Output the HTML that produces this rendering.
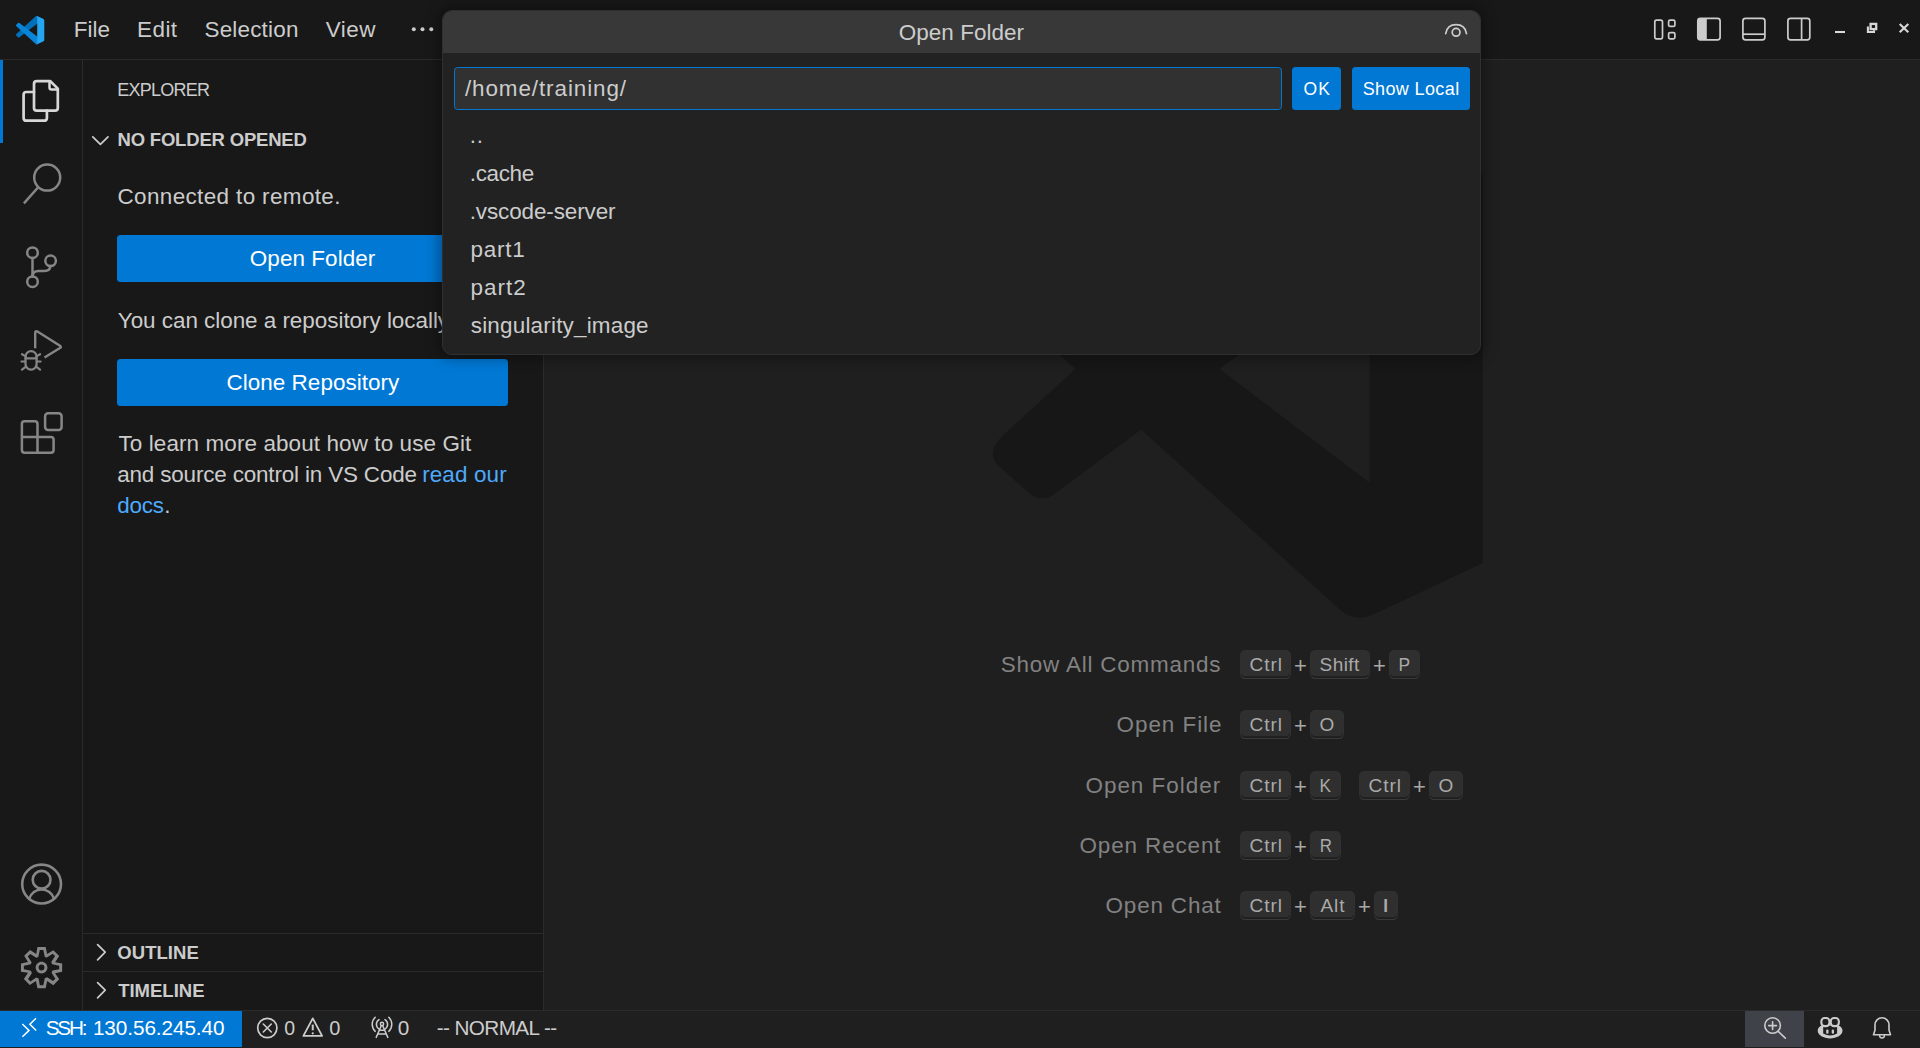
<!DOCTYPE html>
<html lang="en">
<head>
<meta charset="utf-8">
<title>Open Folder - Visual Studio Code</title>
<style>
*{box-sizing:border-box;margin:0;padding:0}
html,body{width:1920px;height:1048px;overflow:hidden;background:#1f1f1f}
body{position:relative;font-family:"Liberation Sans",sans-serif;color:#cccccc;-webkit-font-smoothing:antialiased}
.abs{position:absolute}
.t{position:absolute;white-space:pre;line-height:1}
svg{position:absolute;overflow:visible}
#titlebar{left:0;top:0;width:1920px;height:60px;background:#181818;border-bottom:1px solid #2b2b2b}
#activity{left:0;top:60px;width:83px;height:950px;background:#181818;border-right:1px solid #2b2b2b}
#sidebar{left:83px;top:60px;width:461px;height:950px;background:#181818;border-right:1px solid #2b2b2b}
#editor{left:544px;top:60px;width:1376px;height:950px;background:#1f1f1f}
#status{left:0;top:1010px;width:1920px;height:38px;background:#1f1f1f;border-top:1px solid #2b2b2b}
.btn{background:#0078d4;border-radius:3.5px}
.key{position:absolute;height:29px;background:rgba(128,128,128,.17);border:1.7px solid rgba(51,51,51,.6);border-bottom-color:rgba(68,68,68,.6);border-radius:5.2px;box-shadow:inset 0 -1.7px 0 rgba(0,0,0,.36)}
#dialog{left:442px;top:10px;width:1039px;height:345px;background:#222222;border:1px solid #303031;border-radius:10px;box-shadow:0 0 14px 3px rgba(0,0,0,.36);overflow:hidden}
#dtitle{left:0;top:0;width:1039px;height:42px;background:#383838}
#dinput{left:454px;top:67px;width:828px;height:43px;background:#313131;border:1px solid #0078d4;border-radius:3.5px}
</style>
</head>
<body>
<div id="titlebar" class="abs"></div>
<div id="activity" class="abs"></div>
<div id="sidebar" class="abs"></div>
<div id="editor" class="abs"></div>
<div id="status" class="abs"></div>
<!-- watermark logo -->
<svg class="abs" style="left:0;top:0" width="1920" height="1048" viewBox="0 0 1920 1048">
<path fill="#171717" fill-rule="evenodd" d="M1075.4 369.1 L1004.3 434.3 Q984 453 999.5 466.8 L1028.7 492.7 Q1041.3 504 1056.2 492.7 L1141.1 429.5 L1340.2 609.8 Q1355 623.2 1374.9 613.8 L1482.8 563.1 L1482.8 175.1 L1374.9 124.4 Q1355 115 1340.2 128.4 L1141.1 308.7 L1056.2 245.5 Q1041.3 234.2 1028.7 245.5 L999.5 271.4 Q984 285.2 1004.3 303.9 Z M1219.7 369.1 L1369.8 483 L1369.8 255.2 Z"/>
</svg>
<!-- title logo -->
<svg class="abs" style="left:15.9px;top:15.9px" width="28.3" height="28.3" viewBox="0 0 256 256">
<path d="M246.94 27.6383L194.193 2.24138C188.088 -0.698302 180.791 0.541721 175.999 5.33332L3.32371 162.773C-1.32085 167.008 -1.31551 174.32 3.33523 178.548L17.4399 191.37C21.2421 194.827 26.9682 195.081 31.0619 191.976L239.003 34.2269C245.979 28.9347 255.999 33.9103 255.999 42.6667V42.0543C255.999 35.9078 252.478 30.3047 246.94 27.6383Z" fill="#0070ba"/>
<path d="M246.94 228.362L194.193 253.759C188.088 256.698 180.791 255.458 175.999 250.667L3.32371 93.2272C-1.32085 88.9925 -1.31551 81.6802 3.33523 77.4523L17.4399 64.6298C21.2421 61.1733 26.9682 60.9188 31.0619 64.0244L239.003 221.773C245.979 227.065 255.999 222.09 255.999 213.333V213.946C255.999 220.092 252.478 225.695 246.94 228.362Z" fill="#0a84d6"/>
<path d="M194.196 253.763C188.089 256.7 180.792 255.459 176 250.667C181.904 256.571 192 252.389 192 244.039V11.9606C192 3.61057 181.904 -0.571175 176 5.33321C180.792 0.541166 188.089 -0.700607 194.196 2.23648L246.934 27.5985C252.476 30.2635 256 35.8686 256 42.0178V213.983C256 220.132 252.476 225.737 246.934 228.402L194.196 253.763Z" fill="#24a6f1"/>
</svg>
<!-- menu dots -->
<svg class="abs" style="left:0;top:0" width="1920" height="60" viewBox="0 0 1920 60" fill="#cccccc">
<circle cx="413.8" cy="29.3" r="2"/><circle cx="422.5" cy="29.3" r="2"/><circle cx="431.3" cy="29.3" r="2"/>
<!-- layout icons -->
<g fill="none" stroke="#cccccc" stroke-width="1.7" stroke-linejoin="round">
<rect x="1654.8" y="20.2" width="7.7" height="18.6" rx="1.7"/>
<rect x="1668.6" y="20.2" width="6.3" height="6.2" rx="1.5"/>
<rect x="1668.6" y="32.6" width="6.3" height="6.2" rx="1.5"/>
<rect x="1697.8" y="18.3" width="22.3" height="21.5" rx="2.6"/>
<rect x="1742.9" y="18.3" width="22" height="21.5" rx="2.6"/>
<path d="M1742.9 34.2 H1764.9"/>
<rect x="1787.9" y="18.3" width="21.9" height="21.5" rx="2.6"/>
<path d="M1801.6 18.3 V39.8"/>
</g>
<path d="M1697.8 20.9 Q1697.8 18.3 1700.4 18.3 H1706.8 V39.8 H1700.4 Q1697.8 39.8 1697.8 37.2 Z" fill="#cccccc"/>
<!-- window controls -->
<g fill="none" stroke="#d8d8d8" stroke-width="2.1">
<path d="M1835 32 H1845"/>
<path d="M1899.7 23.9 L1908.3 32.3 M1908.3 23.9 L1899.7 32.3"/>
<rect x="1870.6" y="23.9" width="5.6" height="5.2" stroke-width="2.300"/>
<path d="M1867.9 26.5 V32 H1874 V30.2"/>
</g>
</svg>
<!-- activity bar -->
<div class="abs" style="left:0;top:60px;width:3.2px;height:83px;background:#0078d4"></div>
<svg class="abs" style="left:0;top:0" width="83" height="1010" viewBox="0 0 83 1010" fill="none" stroke-linecap="round" stroke-linejoin="round">
<!-- files -->
<g stroke="#d7d7d7" stroke-width="2.7">
<path d="M36.8 81.1 H50.3 L57.8 88.6 V108 Q57.8 110.7 55 110.7 H36.8 Q34 110.7 34 108 V83.900 Q34 81.1 36.8 81.1 Z"/>
<path d="M49.5 81.6 V87.5 Q49.5 89.5 51.5 89.5 H57.3" stroke-width="2.5"/>
<path d="M34 92 H26.4 Q23.6 92 23.6 94.8 V117.900 Q23.6 120.7 26.4 120.7 H44.100 Q46.900 120.7 46.900 117.900 V110.7"/>
</g>
<g stroke="#868686" stroke-width="2.5">
<!-- search -->
<circle cx="47.2" cy="177.6" r="13"/>
<path d="M38.4 187 L23.900 203.400" stroke-linecap="butt"/>
<!-- source control -->
<circle cx="32.5" cy="252.7" r="5.300"/>
<circle cx="32.5" cy="281.700" r="5.300"/>
<circle cx="50.600" cy="260.800" r="5.300"/>
<path d="M32.5 258 V276.400"/>
<path d="M50.400 266.100 Q50 270.900 44.500 270.900 H38.500 Q32.500 270.900 32.500 276.400"/>
<!-- debug -->
<path d="M35.200 348.300 V332.800 Q35.200 330.300 37.400 331.600 L60 345.800 Q61.700 346.900 60 348 L44.500 357.600" stroke-width="2.4" stroke-linecap="butt"/>
<g stroke-width="2.2">
<rect x="25.500" y="351.200" width="11.100" height="18.500" rx="5.550"/>
<path d="M25.500 358.400 H36.600 M25.800 356.400 L22 354.200 M25.300 361.500 H21.500 M26.300 366.400 L22 369.600 M36.300 356.400 L40.100 354.200 M36.800 361.500 H40.600 M35.800 366.400 L40.100 369.600"/>
</g>
<!-- extensions -->
<path d="M24.600 421.300 H34.800 Q37.500 421.300 37.500 424 V436.900 H50.900 Q53.600 436.900 53.600 439.600 V450.100 Q53.600 452.800 50.900 452.800 H24.600 Q21.900 452.800 21.900 450.100 V424 Q21.900 421.300 24.600 421.300 Z M21.900 436.900 H37.500 V452.800"/>
<rect x="45.100" y="413.300" width="16.500" height="16.600" rx="3"/>
<!-- account -->
<g stroke-width="2.600">
<circle cx="41.600" cy="884.050" r="19.400"/>
<circle cx="41.600" cy="879.750" r="8.900"/>
<path d="M29.300 898.700 A12.800 12.800 0 0 1 53.900 898.700"/>
</g>
</g>
</svg>
<!-- gear -->
<svg class="abs" style="left:18.4px;top:943.75px" width="47.1" height="47.1" viewBox="0 0 16 16"><path fill="#868686" fill-rule="evenodd" d="M9.1 4.4L8.6 2H7.4l-.5 2.4-.7.3-2-1.3-.9.8 1.3 2-.2.7-2.4.5v1.2l2.4.5.3.8-1.3 2 .8.8 2-1.3.8.3.4 2.3h1.2l.5-2.4.8-.3 2 1.3.8-.8-1.3-2 .3-.8 2.3-.4V7.4l-2.4-.5-.3-.8 1.3-2-.8-.8-2 1.3-.7-.2zM9.4 1l.5 2.4L12 2.1l2 2-1.4 2.1 2.4.4v2.8l-2.4.5L14 12l-2 2-2.1-1.4-.5 2.4H6.6l-.5-2.4L4 13.900l-2-2 1.4-2.1L1 9.400V6.600l2.400-.5L2.100 4l2-2 2.100 1.400.4-2.400h2.800zm.6 7c0 1.100-.9 2-2 2s-2-.9-2-2 .9-2 2-2 2 .9 2 2zM8 9c.6 0 1-.4 1-1s-.4-1-1-1-1 .4-1 1 .4 1 1 1z"/></svg>
<!-- sidebar -->
<svg class="abs" style="left:83px;top:60px" width="461" height="950" viewBox="83 60 461 950" fill="none" stroke="#cccccc" stroke-width="1.7" stroke-linecap="round" stroke-linejoin="round">
<path d="M92.8 136.8 L100.4 144.4 L108 136.8"/>
<path d="M97.600 944.6 L105.200 952.2 L97.600 959.8"/>
<path d="M97.600 982.6 L105.200 990.2 L97.600 997.8"/>
</svg>
<div class="abs btn" style="left:117px;top:235px;width:391px;height:47px"></div>
<div class="abs btn" style="left:117px;top:359px;width:391px;height:47px"></div>
<div class="abs" style="left:83px;top:933px;width:460px;height:1px;background:#2b2b2b"></div>
<div class="abs" style="left:83px;top:971px;width:460px;height:1px;background:#2b2b2b"></div>
<!-- status bar -->
<div class="abs" style="left:0;top:1011px;width:242px;height:36px;background:#0078d4"></div>
<div class="abs" style="left:1745px;top:1011px;width:59px;height:36px;background:#3f4248"></div>
<svg class="abs" style="left:0;top:1010px" width="1920" height="38" viewBox="0 1010 1920 38" fill="none" stroke="#cccccc" stroke-width="1.6" stroke-linecap="round" stroke-linejoin="round">
<path d="M22.3 1024 L29 1030.4 L22.4 1036.700 M36 1018.200 L29.900 1024.300 L36.200 1030.500" stroke="#ffffff" stroke-width="1.5" stroke-linecap="butt" stroke-linejoin="miter"/>
<circle cx="267.3" cy="1028" r="9.600" stroke-width="1.700"/>
<path d="M263.3 1024 L271.3 1032 M271.3 1024 L263.3 1032" stroke-width="1.600"/>
<path d="M312.75 1018.400 L322.100 1035.900 H303.400 Z" stroke-width="1.800"/>
<path d="M312.75 1024.600 V1030.300" stroke-width="2" stroke-linecap="butt"/>
<circle cx="312.75" cy="1033.300" r="1.100" fill="#cccccc" stroke="none"/>
<!-- radio tower -->
<g stroke-width="1.500">
<circle cx="382" cy="1023.900" r="1.600"/>
<path d="M381.300 1025.800 L376.200 1037.400 M382.700 1025.800 L387.800 1037.400 M379.600 1030.300 H384.400 M377.900 1034 H386.100"/>
<path d="M379.030 1029.050 A5.600 5.600 0 0 1 379.030 1019.550 M384.970 1029.050 A5.600 5.600 0 0 0 384.970 1019.550"/>
<path d="M375.200 1031.350 A9.800 9.800 0 0 1 375.200 1017.250 M388.800 1031.350 A9.800 9.800 0 0 0 388.800 1017.250"/>
</g>
<!-- zoom -->
<circle cx="1772.600" cy="1025.500" r="7.800"/>
<path d="M1768.700 1025.600 H1776.500 M1772.600 1021.700 V1029.500 M1778.100 1031.300 L1785.300 1038.100"/>
<!-- copilot -->
<path d="M1821.500 1025.500 C1819 1026.500 1817.700 1028.500 1817.700 1030.800 C1817.700 1035 1823.500 1038.500 1830.100 1038.500 C1836.700 1038.500 1842.500 1035 1842.500 1030.800 C1842.500 1028.500 1841.200 1026.500 1838.700 1025.500 Z M1823.200 1026 H1837.100 V1033.600 Q1830.150 1037.400 1823.200 1033.600 Z" fill="#cccccc" fill-rule="evenodd" stroke="none"/>
<rect x="1826.200" y="1029.400" width="2.300" height="4.300" rx="1" fill="#cccccc" stroke="none"/>
<rect x="1831.700" y="1029.400" width="2.300" height="4.300" rx="1" fill="#cccccc" stroke="none"/>
<rect x="1821.350" y="1017.950" width="8.100" height="8.200" rx="3.300" fill="#1f1f1f" stroke-width="2.100"/>
<rect x="1830.750" y="1017.950" width="8.100" height="8.200" rx="3.300" fill="#1f1f1f" stroke-width="2.100"/>
<!-- bell -->
<path d="M1873.500 1034.700 H1890.500 L1889 1030 V1024.800 A7 7 0 0 0 1875 1024.800 V1030 Z"/>
<path d="M1879.600 1035.500 A2.400 2.400 0 0 0 1884.400 1035.500" stroke-width="1.500"/>
</svg>

<div class="key" style="left:1240.2px;top:650.2px;width:50.5px"></div>
<div class="key" style="left:1310.2px;top:650.2px;width:59.5px"></div>
<div class="key" style="left:1389.1px;top:650.2px;width:30.5px"></div>
<div class="key" style="left:1240.2px;top:710.0px;width:50.5px"></div>
<div class="key" style="left:1310.2px;top:710.0px;width:33.5px"></div>
<div class="key" style="left:1240.2px;top:771.0px;width:50.5px"></div>
<div class="key" style="left:1310.3px;top:771.0px;width:30.5px"></div>
<div class="key" style="left:1359.2px;top:771.0px;width:50.5px"></div>
<div class="key" style="left:1429.2px;top:771.0px;width:33.5px"></div>
<div class="key" style="left:1240.2px;top:831.0px;width:50.5px"></div>
<div class="key" style="left:1310.3px;top:831.0px;width:31.1px"></div>
<div class="key" style="left:1240.2px;top:891.0px;width:50.5px"></div>
<div class="key" style="left:1310.3px;top:891.0px;width:44.4px"></div>
<div class="key" style="left:1374.3px;top:891.0px;width:23.3px"></div>
<span class="t" style="left:73.68px;top:19.00px;font-size:22.46px;letter-spacing:0.009px;color:#cccccc">File</span>
<span class="t" style="left:137.08px;top:19.00px;font-size:22.46px;letter-spacing:0.436px;color:#cccccc">Edit</span>
<span class="t" style="left:204.48px;top:19.00px;font-size:22.46px;letter-spacing:0.193px;color:#cccccc">Selection</span>
<span class="t" style="left:325.84px;top:19.00px;font-size:22.46px;letter-spacing:0.457px;color:#cccccc">View</span>
<span class="t" style="left:117.37px;top:81.00px;font-size:18.0px;letter-spacing:-0.759px;color:#cccccc">EXPLORER</span>
<span class="t" style="left:117.47px;top:131.00px;font-size:18.5px;letter-spacing:-0.187px;color:#cccccc;font-weight:700">NO FOLDER OPENED</span>
<span class="t" style="left:117.51px;top:186.00px;font-size:22.46px;letter-spacing:0.370px;color:#cccccc">Connected to remote.</span>
<span class="t" style="left:249.83px;top:248.00px;font-size:22.46px;letter-spacing:0.062px;color:#ffffff">Open Folder</span>
<span class="t" style="left:117.78px;top:310.00px;font-size:22.46px;letter-spacing:-0.034px;color:#cccccc">You can clone a repository locally.</span>
<span class="t" style="left:226.51px;top:372.00px;font-size:22.46px;letter-spacing:0.035px;color:#ffffff">Clone Repository</span>
<span class="t" style="left:118.46px;top:433.00px;font-size:22.46px;letter-spacing:0.104px;color:#cccccc">To learn more about how to use Git</span>
<span class="t" style="left:117.16px;top:464.00px;font-size:22.46px;letter-spacing:-0.167px;color:#cccccc">and source control in VS Code</span>
<span class="t" style="left:422.16px;top:464.00px;font-size:22.46px;letter-spacing:0.126px;color:#4daafc">read our</span>
<span class="t" style="left:117.16px;top:495.00px;font-size:22.46px;letter-spacing:-0.178px;color:#4daafc">docs</span>
<span class="t" style="left:164.31px;top:495.00px;font-size:22.46px;letter-spacing:0.000px;color:#cccccc">.</span>
<span class="t" style="left:117.29px;top:944.00px;font-size:18.5px;letter-spacing:0.060px;color:#cccccc;font-weight:700">OUTLINE</span>
<span class="t" style="left:118.19px;top:982.00px;font-size:18.5px;letter-spacing:-0.007px;color:#cccccc;font-weight:700">TIMELINE</span>
<span class="t" style="left:45.72px;top:1018.00px;font-size:20.74px;letter-spacing:-2.199px;color:#ffffff">SSH:</span>
<span class="t" style="left:92.93px;top:1018.00px;font-size:20.74px;letter-spacing:-0.086px;color:#ffffff">130.56.245.40</span>
<span class="t" style="left:283.89px;top:1018.00px;font-size:20.74px;letter-spacing:0.000px;color:#cccccc;transform:scaleX(0.941);transform-origin:5.96px 50%">0</span>
<span class="t" style="left:329.49px;top:1018.00px;font-size:20.74px;letter-spacing:0.000px;color:#cccccc;transform:scaleX(0.962);transform-origin:5.96px 50%">0</span>
<span class="t" style="left:397.74px;top:1018.00px;font-size:20.74px;letter-spacing:0.000px;color:#cccccc">0</span>
<span class="t" style="left:436.76px;top:1018.00px;font-size:20.74px;letter-spacing:-0.614px;color:#cccccc">-- NORMAL --</span>
<span class="t" style="left:1000.78px;top:654.00px;font-size:22.46px;letter-spacing:0.791px;color:#828282">Show All Commands</span>
<span class="t" style="left:1116.53px;top:714.00px;font-size:22.46px;letter-spacing:0.960px;color:#828282">Open File</span>
<span class="t" style="left:1085.43px;top:775.00px;font-size:22.46px;letter-spacing:1.002px;color:#828282">Open Folder</span>
<span class="t" style="left:1079.53px;top:835.00px;font-size:22.46px;letter-spacing:0.872px;color:#828282">Open Recent</span>
<span class="t" style="left:1105.53px;top:895.00px;font-size:22.46px;letter-spacing:0.835px;color:#828282">Open Chat</span>
<span class="t" style="left:1249.55px;top:655.00px;font-size:19.0px;letter-spacing:0.918px;color:#aaaaaa">Ctrl</span>
<span class="t" style="left:1293.95px;top:655.00px;font-size:22.0px;letter-spacing:0.000px;color:#a8a8a8">+</span>
<span class="t" style="left:1319.51px;top:655.00px;font-size:19.0px;letter-spacing:0.469px;color:#aaaaaa">Shift</span>
<span class="t" style="left:1372.90px;top:655.00px;font-size:22.0px;letter-spacing:0.000px;color:#a8a8a8">+</span>
<span class="t" style="left:1397.78px;top:655.00px;font-size:19.0px;letter-spacing:0.000px;color:#aaaaaa;transform:scaleX(0.914);transform-origin:6.57px 50%">P</span>
<span class="t" style="left:1249.55px;top:715.00px;font-size:19.0px;letter-spacing:0.918px;color:#aaaaaa">Ctrl</span>
<span class="t" style="left:1293.95px;top:715.00px;font-size:22.0px;letter-spacing:0.000px;color:#a8a8a8">+</span>
<span class="t" style="left:1319.46px;top:715.00px;font-size:19.0px;letter-spacing:0.000px;color:#aaaaaa">O</span>
<span class="t" style="left:1249.55px;top:776.00px;font-size:19.0px;letter-spacing:0.918px;color:#aaaaaa">Ctrl</span>
<span class="t" style="left:1294.00px;top:776.00px;font-size:22.0px;letter-spacing:0.000px;color:#a8a8a8">+</span>
<span class="t" style="left:1318.93px;top:776.00px;font-size:19.0px;letter-spacing:0.000px;color:#aaaaaa;transform:scaleX(0.907);transform-origin:6.62px 50%">K</span>
<span class="t" style="left:1368.55px;top:776.00px;font-size:19.0px;letter-spacing:0.918px;color:#aaaaaa">Ctrl</span>
<span class="t" style="left:1412.95px;top:776.00px;font-size:22.0px;letter-spacing:0.000px;color:#a8a8a8">+</span>
<span class="t" style="left:1438.46px;top:776.00px;font-size:19.0px;letter-spacing:0.000px;color:#aaaaaa">O</span>
<span class="t" style="left:1249.55px;top:836.00px;font-size:19.0px;letter-spacing:0.918px;color:#aaaaaa">Ctrl</span>
<span class="t" style="left:1294.00px;top:836.00px;font-size:22.0px;letter-spacing:0.000px;color:#a8a8a8">+</span>
<span class="t" style="left:1318.80px;top:836.00px;font-size:19.0px;letter-spacing:0.000px;color:#aaaaaa;transform:scaleX(0.891);transform-origin:7.05px 50%">R</span>
<span class="t" style="left:1249.55px;top:896.00px;font-size:19.0px;letter-spacing:0.918px;color:#aaaaaa">Ctrl</span>
<span class="t" style="left:1294.00px;top:896.00px;font-size:22.0px;letter-spacing:0.000px;color:#a8a8a8">+</span>
<span class="t" style="left:1320.57px;top:896.00px;font-size:19.0px;letter-spacing:0.879px;color:#aaaaaa">Alt</span>
<span class="t" style="left:1358.00px;top:896.00px;font-size:22.0px;letter-spacing:0.000px;color:#a8a8a8">+</span>
<span class="t" style="left:1383.03px;top:896.00px;font-size:19.0px;letter-spacing:0.000px;color:#aaaaaa;transform:scaleX(1.372);transform-origin:2.92px 50%">I</span>
<div id="dialog" class="abs"><div id="dtitle" class="abs"></div></div>
<div id="dinput" class="abs"></div>
<div class="abs btn" style="left:1292px;top:67px;width:49px;height:43px"></div>
<div class="abs btn" style="left:1352px;top:67px;width:118px;height:43px"></div>
<svg class="abs" style="left:1440px;top:18px" width="32" height="24" viewBox="1440 18 32 24" fill="none" stroke="#cccccc" stroke-width="1.7" stroke-linecap="round">
<path d="M1445.7 33.600 Q1447.200 24.700 1456.100 24.700 Q1465 24.700 1466.500 33.600"/>
<circle cx="1456.100" cy="32.300" r="3.900"/>
</svg>
<span class="t" style="left:898.83px;top:22.00px;font-size:22.46px;letter-spacing:0.032px;color:#cccccc">Open Folder</span>
<span class="t" style="left:464.91px;top:78.00px;font-size:22.46px;letter-spacing:0.903px;color:#cccccc">/home/training/</span>
<span class="t" style="left:469.74px;top:125.00px;font-size:22.46px;letter-spacing:0.873px;color:#cccccc">..</span>
<span class="t" style="left:469.74px;top:163.00px;font-size:22.46px;letter-spacing:-0.346px;color:#cccccc">.cache</span>
<span class="t" style="left:469.74px;top:201.00px;font-size:22.46px;letter-spacing:-0.114px;color:#cccccc">.vscode-server</span>
<span class="t" style="left:470.57px;top:239.00px;font-size:22.46px;letter-spacing:0.734px;color:#cccccc">part1</span>
<span class="t" style="left:470.57px;top:277.00px;font-size:22.46px;letter-spacing:0.984px;color:#cccccc">part2</span>
<span class="t" style="left:470.78px;top:315.00px;font-size:22.46px;letter-spacing:0.195px;color:#cccccc">singularity_image</span>
<span class="t" style="left:1303.58px;top:81.00px;font-size:17.5px;letter-spacing:1.180px;color:#ffffff">OK</span>
<span class="t" style="left:1362.73px;top:80.00px;font-size:18.0px;letter-spacing:0.372px;color:#ffffff">Show Local</span>
</body>
</html>
